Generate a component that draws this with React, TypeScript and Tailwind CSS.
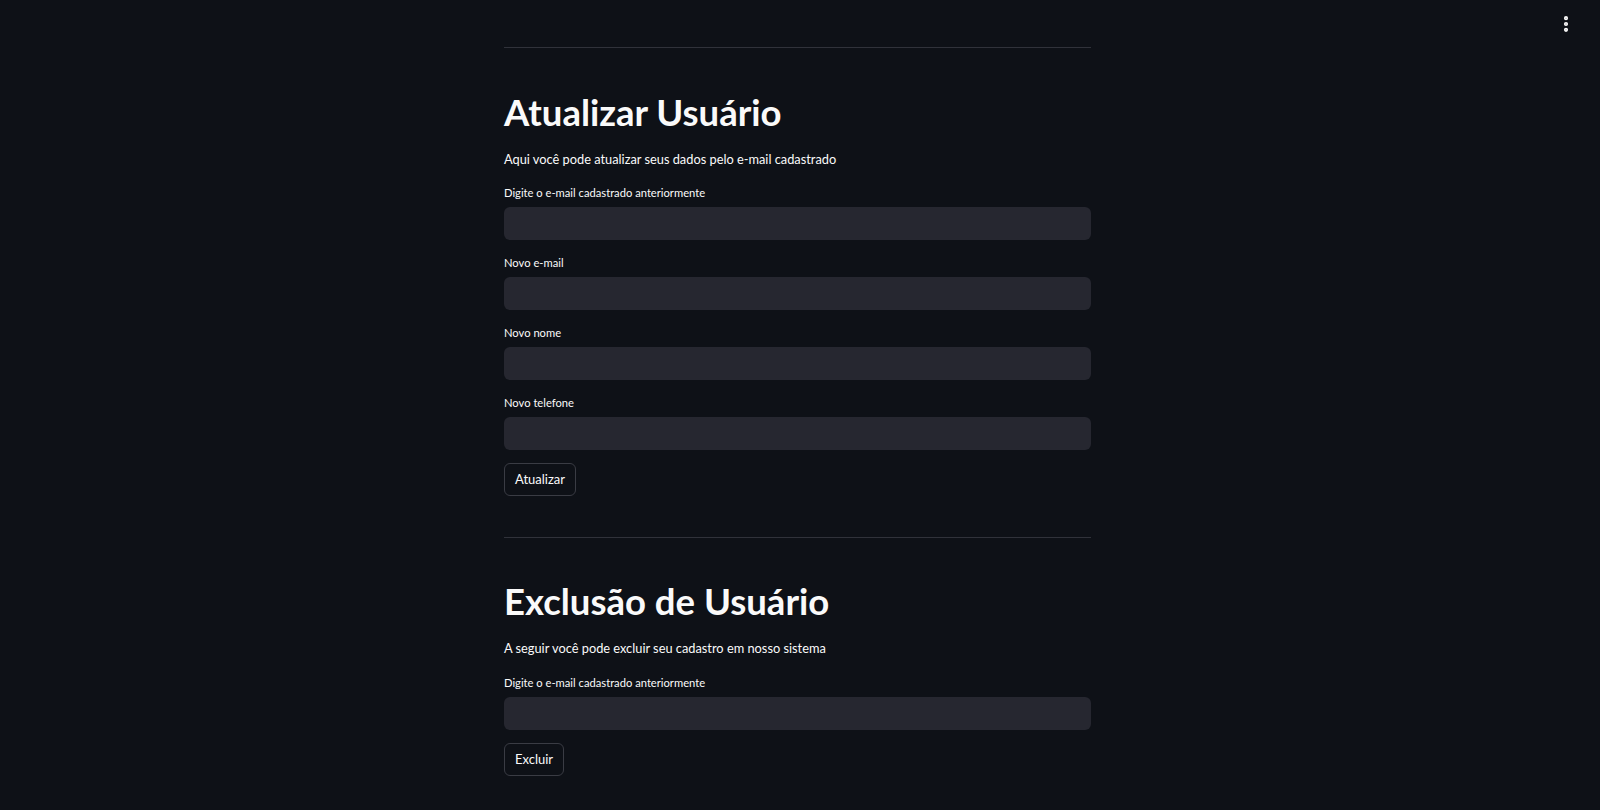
import { EllipsisVertical } from "lucide-react";

const font = { fontFamily: "Lato, 'Noto Sans', sans-serif" };

function Field({ label, top = "mt-[16px]" }: { label: string; top?: string }) {
  return (
    <div className={top}>
      <label className="block text-[11.2px] leading-[14px] text-[#fafafa]">{label}</label>
      <div className="mt-[7px] h-[33px] w-full rounded-[6px] bg-[#262730]" />
    </div>
  );
}

function Button({ text }: { text: string }) {
  return (
    <button className="mt-[13px] h-[33px] self-start rounded-[6px] border border-[#3a3c44] bg-[#0e1117] px-[10px] text-[13px] text-[#fafafa]">
      {text}
    </button>
  );
}

export default function App() {
  return (
    <div className="relative h-[810px] w-full overflow-hidden bg-[#0e1117] text-[#fafafa]" style={font}>
      <div className="absolute right-[24px] top-[14px] text-[#fafafa]">
        <EllipsisVertical size={20} strokeWidth={3} />
      </div>

      <div className="flex justify-center pr-[5px]">
        <div className="flex w-[587px] flex-col">
          <hr className="mt-[47px] border-0 border-t border-[#30323a]" />

          <h1 className="mt-[43px] text-[36.5px] font-bold leading-[42px]">Atualizar Usuário</h1>
          <p className="mt-[16px] text-[12.8px] leading-[20px]">Aqui você pode atualizar seus dados pelo e-mail cadastrado</p>

          <Field label="Digite o e-mail cadastrado anteriormente" top="mt-[17px]" />
          <Field label="Novo e-mail" />
          <Field label="Novo nome" />
          <Field label="Novo telefone" />
          <Button text="Atualizar" />

          <hr className="mt-[41px] border-0 border-t border-[#30323a]" />

          <h1 className="mt-[42px] text-[36.5px] font-bold leading-[42px]">Exclusão de Usuário</h1>
          <p className="mt-[16px] text-[12.8px] leading-[20px]">A seguir você pode excluir seu cadastro em nosso sistema</p>

          <Field label="Digite o e-mail cadastrado anteriormente" top="mt-[18px]" />
          <Button text="Excluir" />
        </div>
      </div>
    </div>
  );
}
